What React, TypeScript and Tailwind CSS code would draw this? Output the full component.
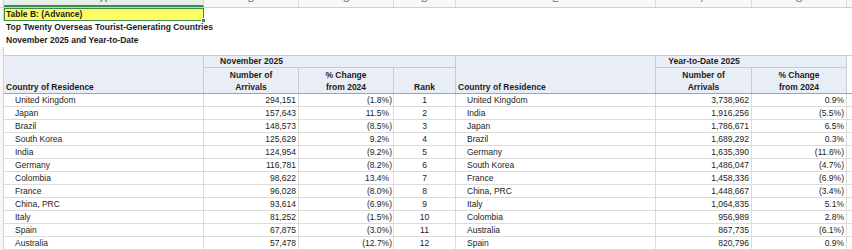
const NOV = [
  ['United Kingdom', '294,151', '(1.8%)', '1'],
  ['Japan', '157,643', '11.5%', '2'],
  ['Brazil', '148,573', '(8.5%)', '3'],
  ['South Korea', '125,629', '9.2%', '4'],
  ['India', '124,954', '(9.2%)', '5'],
  ['Germany', '116,781', '(8.2%)', '6'],
  ['Colombia', '98,622', '13.4%', '7'],
  ['France', '96,028', '(8.0%)', '8'],
  ['China, PRC', '93,614', '(6.9%)', '9'],
  ['Italy', '81,252', '(1.5%)', '10'],
  ['Spain', '67,875', '(3.0%)', '11'],
  ['Australia', '57,478', '(12.7%)', '12'],
]

const YTD = [
  ['United Kingdom', '3,738,962', '0.9%'],
  ['India', '1,916,256', '(5.5%)'],
  ['Japan', '1,786,671', '6.5%'],
  ['Brazil', '1,689,292', '0.3%'],
  ['Germany', '1,635,390', '(11.6%)'],
  ['South Korea', '1,486,047', '(4.7%)'],
  ['France', '1,458,336', '(6.9%)'],
  ['China, PRC', '1,448,667', '(3.4%)'],
  ['Italy', '1,064,835', '5.1%'],
  ['Colombia', '956,989', '2.8%'],
  ['Australia', '867,735', '(6.1%)'],
  ['Spain', '820,796', '0.9%'],
]

function Stub() {
  return <div className="w-[4px] shrink-0 bg-[#f6f6f6] border-r border-[#d4d4d4]" />
}

function Pct({ value, pad }: { value: string; pad: boolean }) {
  const neg = value.startsWith('(')
  return (
    <span>
      {value}
      {pad && !neg && <span className="invisible">)</span>}
    </span>
  )
}

function App() {
  const letters: [string, string][] = [
    ['A', 'w-[200px]'],
    ['B', 'w-[95px]'],
    ['C', 'w-[95px]'],
    ['D', 'w-[62px]'],
    ['E', 'w-[200px]'],
    ['F', 'w-[96px]'],
    ['G', 'w-[95px]'],
  ]

  return (
    <div className="w-[852px] h-[250px] overflow-hidden bg-white text-[#1c1c1c] font-['Liberation_Sans',Arial,sans-serif] text-[8.5px] leading-none">
      {/* column letters, mostly scrolled out of view */}
      <div className="flex h-[8px] overflow-hidden bg-[#f8f8f8] border-b border-[#d0d0d0]">
        <div className="w-[4px] shrink-0 border-r border-[#d0d0d0]" />
        {letters.map(([l, w]) => (
          <div
            key={l}
            className={`${w} shrink-0 flex justify-center border-r border-[#d8d8d8] ${l === 'A' ? 'bg-[#e6efe8] border-b-2 border-b-[#3f8a4f] text-[#2f7a40]' : 'text-[#777]'}`}
          >
            <span className="mt-[-6px] text-[10px] leading-[10px]">{l}</span>
          </div>
        ))}
        <div className="flex-1" />
      </div>

      {/* title rows */}
      <div className="flex h-[13px]">
        <Stub />
        <div className="relative w-[200px] shrink-0 bg-[#fdfc62] border border-[#3f8a4f] flex items-center pl-[1px] font-bold whitespace-nowrap">
          Table B: (Advance)
          <div className="absolute right-[-3px] bottom-[-3px] w-[5px] h-[5px] bg-[#3f8a4f] border border-white" />
        </div>
      </div>
      <div className="flex h-[13px] items-center">
        <Stub />
        <div className="pl-[2px] font-bold whitespace-nowrap">Top Twenty Overseas Tourist-Generating Countries</div>
      </div>
      <div className="flex h-[13px] items-center">
        <Stub />
        <div className="pl-[2px] font-bold whitespace-nowrap">November 2025 and Year-to-Date</div>
      </div>
      <div className="flex h-[8px]">
        <Stub />
      </div>

      {/* header */}
      <div className="flex h-[39px] font-bold">
        <Stub />
        <div className="flex w-[848px] border-t border-b border-t-[#c6cad2] border-b-[#a3a3a3]">
          <div className="w-[200px] shrink-0 bg-[#e9edf5] border-r border-[#c6cad2] flex items-end pl-[2px] pb-[2px]">
            Country of Residence
          </div>
          <div className="w-[252px] shrink-0 flex flex-col bg-[#e9edf5] border-r border-[#c6cad2]">
            <div className="h-[12px] border-b border-[#c6cad2] flex items-center">
              <span className="w-[95px] text-center whitespace-nowrap">November 2025</span>
            </div>
            <div className="flex flex-1">
              <div className="w-[95px] border-r border-[#c6cad2] flex flex-col items-center justify-end pb-[2px] gap-[3px]">
                <span>Number of</span>
                <span>Arrivals</span>
              </div>
              <div className="w-[95px] border-r border-[#c6cad2] flex flex-col items-center justify-end pb-[2px] gap-[3px]">
                <span>% Change</span>
                <span>from 2024</span>
              </div>
              <div className="flex-1 flex flex-col items-center justify-end pb-[2px]">
                <span>Rank</span>
              </div>
            </div>
          </div>
          <div className="w-[200px] shrink-0 bg-[#e9edf5] border-r border-[#c6cad2] flex items-end pl-[2px] pb-[2px]">
            Country of Residence
          </div>
          <div className="w-[191px] shrink-0 flex flex-col bg-[#e9edf5] border-r border-[#c6cad2]">
            <div className="h-[12px] border-b border-[#c6cad2] flex items-center">
              <span className="w-[96px] text-center whitespace-nowrap">Year-to-Date 2025</span>
            </div>
            <div className="flex flex-1">
              <div className="w-[96px] border-r border-[#c6cad2] flex flex-col items-center justify-end pb-[2px] gap-[3px]">
                <span>Number of</span>
                <span>Arrivals</span>
              </div>
              <div className="flex-1 flex flex-col items-center justify-end pb-[2px] gap-[3px]">
                <span>% Change</span>
                <span>from 2024</span>
              </div>
            </div>
          </div>
          <div className="flex-1" />
        </div>
      </div>

      {/* data rows */}
      {NOV.map((n, i) => {
        const y = YTD[i]
        return (
          <div key={n[0]} className="flex h-[13px]">
            <Stub />
            <div className="flex w-[848px] border-b border-[#dcdcdc]">
              <div className="w-[200px] shrink-0 border-r border-[#dcdcdc] flex items-center pl-[11px] whitespace-nowrap">{n[0]}</div>
              <div className="w-[95px] shrink-0 border-r border-[#dcdcdc] flex items-center justify-end pr-[2px]">{n[1]}</div>
              <div className="w-[95px] shrink-0 border-r border-[#dcdcdc] flex items-center justify-end pr-[1px]">
                <Pct value={n[2]} pad />
              </div>
              <div className="w-[62px] shrink-0 border-r border-[#dcdcdc] flex items-center justify-center">{n[3]}</div>
              <div className="w-[200px] shrink-0 border-r border-[#dcdcdc] flex items-center pl-[11px] whitespace-nowrap">{y[0]}</div>
              <div className="w-[96px] shrink-0 border-r border-[#dcdcdc] flex items-center justify-end pr-[2px]">{y[1]}</div>
              <div className="w-[95px] shrink-0 border-r border-[#dcdcdc] flex items-center justify-end pr-[2px]">
                <Pct value={y[2]} pad={false} />
              </div>
              <div className="flex-1" />
            </div>
          </div>
        )
      })}
    </div>
  )
}

export default App
